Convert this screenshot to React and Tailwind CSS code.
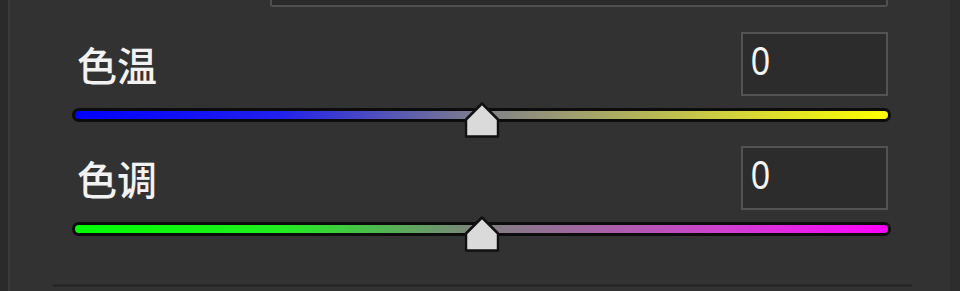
import React from "react";

function Thumb() {
  return (
    <svg
      className="absolute left-1/2 top-[-6px] -translate-x-1/2"
      width="35"
      height="36"
      viewBox="0 0 35 36"
    >
      <polygon
        points="17.5,1.5 33.5,17.5 33.5,34.5 1.5,34.5 1.5,17.5"
        fill="#dadada"
        stroke="#111"
        strokeWidth="2.5"
        strokeLinejoin="round"
      />
    </svg>
  );
}

function SliderRow({ label, gradient, className }) {
  return (
    <div className={className}>
      <div className="flex items-center justify-between pl-[5px] pr-[3px]">
        <span className="text-[40px] leading-none text-[#f2f2f2] font-['Noto_Sans_CJK_SC',sans-serif] font-medium">
          {label}
        </span>
        <div className="flex h-[64px] w-[147px] items-center border-2 border-[#535353] bg-[#2c2c2c] pb-[6px] pl-[8px]">
          <span className="text-[40px] leading-none text-[#f4f4f4] font-['Liberation_Sans',sans-serif] scale-x-[0.85] origin-left">
            0
          </span>
        </div>
      </div>
      <div className="relative mt-[12px] h-[14px] rounded-full bg-[#0c0c0c] p-[3px]">
        <div className={"h-full rounded-full " + gradient} />
        <Thumb />
      </div>
    </div>
  );
}

export default function App() {
  return (
    <div className="flex h-[291px] w-[960px] overflow-hidden bg-[#323232]">
      <div className="w-[10px] shrink-0 border-r-2 border-[#3a3a3a] bg-[#2a2a2a]" />
      <div className="flex flex-1 flex-col">
        <div className="ml-[260px] mr-[62px] h-[7px] rounded-b-[3px] border-x-2 border-b-2 border-[#505050] bg-[#2a2a2a]" />
        <div className="flex-1 pl-[62px] pr-[59px]">
          <SliderRow
            label="色温"
            gradient="bg-[linear-gradient(to_right,#0000ff,#2020ee_25%,#80808a_50%,#d0d040_80%,#ffff00)]"
            className="mt-[25px]"
          />
          <SliderRow
            label="色调"
            gradient="bg-[linear-gradient(to_right,#00ff00,#20ee20_25%,#808080_50%,#d040d0_80%,#ff00ff)]"
            className="mt-[24px]"
          />
        </div>
        <div className="mb-[4px] ml-[43px] mr-[38px] h-[3px] bg-[#262626]" />
      </div>
      <div className="w-[10px] shrink-0 border-l border-[#2c2c2c] bg-[#2d2d2d]" />
    </div>
  );
}
